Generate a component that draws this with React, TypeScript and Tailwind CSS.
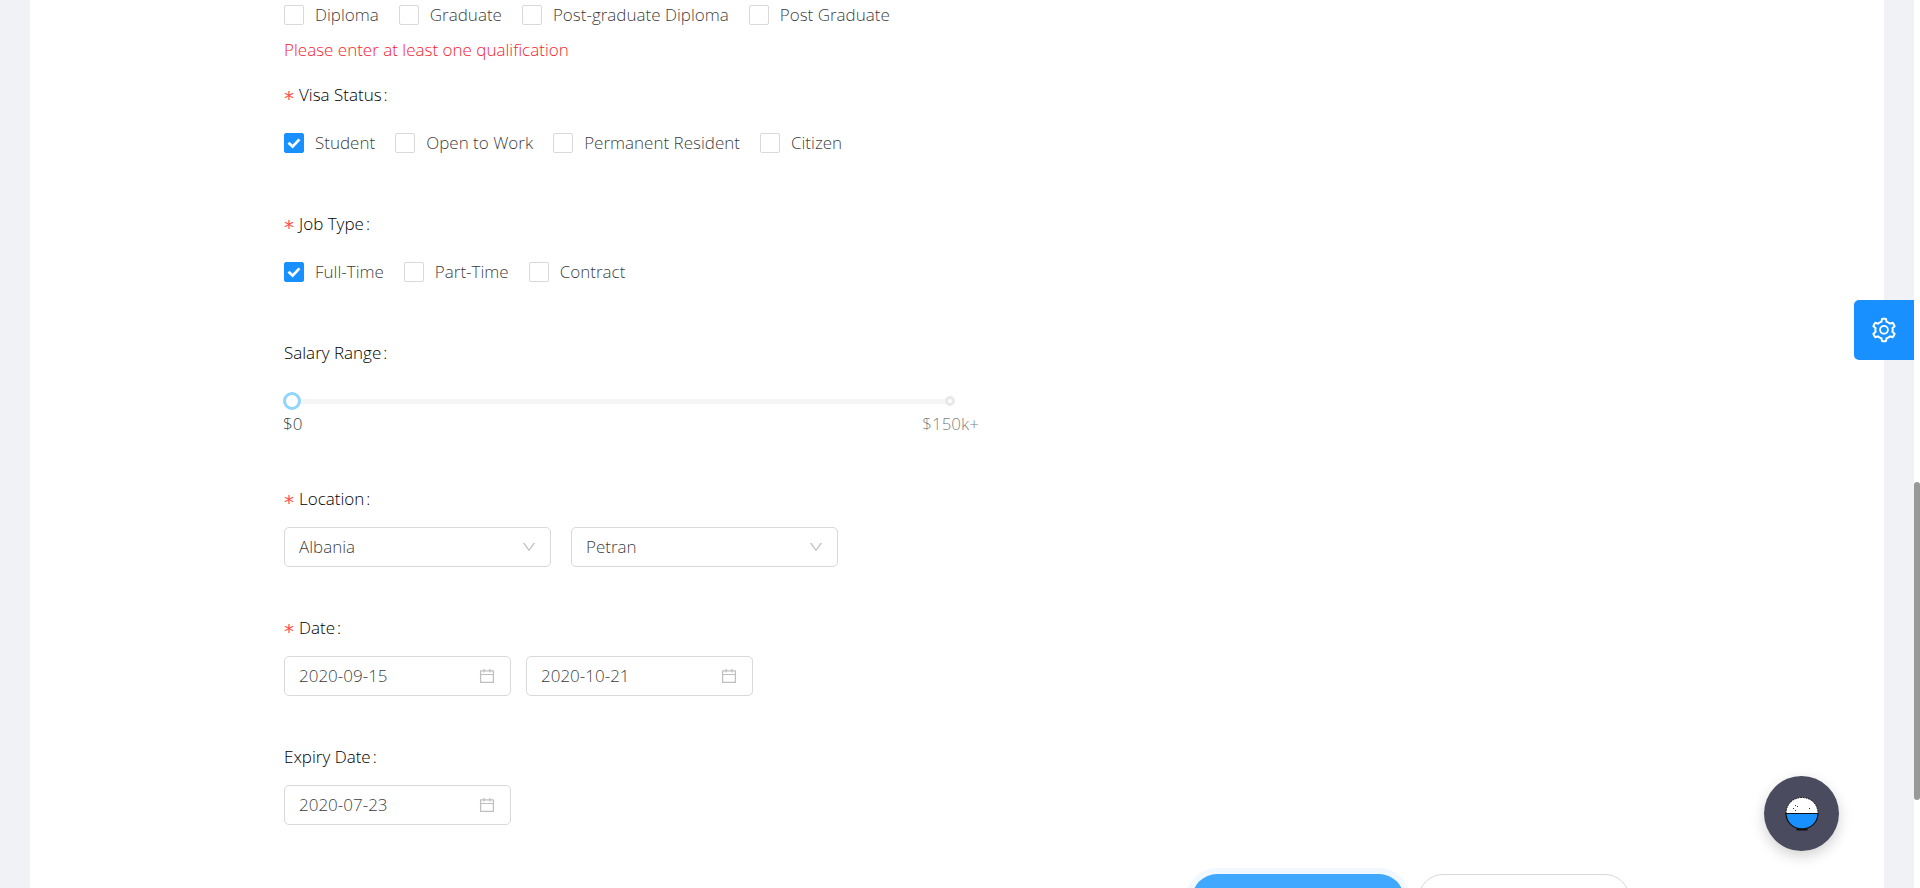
import { useState, type ReactNode } from "react";
import { AiOutlineCalendar, AiOutlineDown, AiOutlineSetting } from "react-icons/ai";

function Label({ text, htmlFor, required }: { text: string; htmlFor?: string; required?: boolean }) {
  return (
    <label htmlFor={htmlFor} className="mb-2 flex h-10 items-center text-black">
      {required && (
        <span className="mt-1.5 w-[15px] font-['DejaVu_Sans'] text-xl leading-5 font-normal text-[#ff4d4f]">*</span>
      )}
      <span>{text}</span>
      <span className="ml-0.5">:</span>
    </label>
  );
}

function Field({ text, htmlFor, required, children }: { text: string; htmlFor?: string; required?: boolean; children: ReactNode }) {
  return (
    <div className="mb-[41px]">
      <Label text={text} htmlFor={htmlFor} required={required} />
      {children}
    </div>
  );
}

function Check({ label, defaultChecked }: { label: string; defaultChecked?: boolean }) {
  return (
    <label className="flex items-center gap-[11px]">
      <span className="grid size-5">
        <input
          type="checkbox"
          defaultChecked={defaultChecked}
          className="peer col-start-1 row-start-1 size-5 appearance-none rounded-[2px] border border-[#d9d9d9] bg-white checked:border-[#1890ff] checked:bg-[#1890ff]"
        />
        <svg
          viewBox="0 0 20 20"
          aria-hidden="true"
          className="pointer-events-none invisible col-start-1 row-start-1 size-5 peer-checked:visible"
        >
          <path d="M4.5 9.8 8.6 13.6 15.4 6.4" fill="none" stroke="#fff" strokeWidth="2.8" />
        </svg>
      </span>
      <span>{label}</span>
    </label>
  );
}

function CheckRow({ items, checked }: { items: string[]; checked?: string }) {
  return (
    <div className="flex h-10 flex-wrap items-center gap-5">
      {items.map((item) => (
        <Check key={item} label={item} defaultChecked={item === checked} />
      ))}
    </div>
  );
}

function Picker({ id, label, value }: { id: string; label: string; value: string }) {
  return (
    <div className="flex h-10 w-[227px] items-center rounded-[5px] border border-[#d9d9d9] bg-white px-3.5">
      <input id={id} aria-label={label} defaultValue={value} className="min-w-0 flex-1 bg-transparent outline-none" />
      <AiOutlineCalendar className="size-[18px] text-black/25" aria-hidden="true" />
    </div>
  );
}

function Select({ id, label, value }: { id: string; label: string; value: string }) {
  return (
    <div className="grid w-[267px] items-center">
      <select
        id={id}
        aria-label={label}
        defaultValue={value}
        className="col-start-1 row-start-1 h-10 appearance-none rounded-[5px] border border-[#d9d9d9] bg-white px-3.5"
      >
        <option>{value}</option>
      </select>
      <AiOutlineDown
        className="pointer-events-none col-start-1 row-start-1 mr-3.5 size-4 justify-self-end text-black/25"
        aria-hidden="true"
      />
    </div>
  );
}

function RiceBowl() {
  return (
    <svg viewBox="0 0 36 36" className="size-9" aria-hidden="true">
      <path d="M2 17.5C2 8 9 1.500 18 1.500S34 8 34 17.500Z" fill="#fff" />
      <path
        d="M2 17.500C2 8 9 1.500 18 1.500S34 8 34 17.500"
        fill="none"
        stroke="#111"
        strokeWidth="1"
        strokeDasharray="1.600 1"
      />
      <path d="M2 17.500h32C34 26 27 33 18 33S2 26 2 17.500Z" fill="#1890ff" stroke="#111" strokeWidth="1.200" />
      <path d="M12.500 33.500h11" stroke="#111" strokeWidth="2" />
      <path d="M9 12.500h1M11 9.500h1M13 10.500h1M11 14.500h1M25 12.500h1" stroke="#333" />
    </svg>
  );
}

export default function App() {
  const [salary, setSalary] = useState(0);
  return (
    <div className="relative flex h-screen overflow-hidden bg-white font-['Open_Sans',sans-serif] text-[17px] leading-6 font-light text-black/80">
      <div className="min-w-0 flex-1 bg-[#f0f2f5] px-[30px]">
        <main className="min-h-full bg-white">
          <form className="mx-auto w-full max-w-[1346px]">
            <div className="-mt-[5px]">
              <CheckRow items={["Diploma", "Graduate", "Post-graduate Diploma", "Post Graduate"]} />
              <p className="h-10 leading-[30px] text-[#f5222d]">Please enter at least one qualification</p>
            </div>
            <Field text="Visa Status" required>
              <CheckRow items={["Student", "Open to Work", "Permanent Resident", "Citizen"]} checked="Student" />
            </Field>
            <Field text="Job Type" required>
              <CheckRow items={["Full-Time", "Part-Time", "Contract"]} checked="Full-Time" />
            </Field>
            <Field text="Salary Range" htmlFor="salary">
              <div className="-ml-px w-[676px] pt-[11px]">
                <div className="relative flex h-[18px] items-center px-[9px]">
                  <div className="h-[5px] flex-1 rounded-full bg-[#f5f5f5]" />
                  <span className="absolute top-1 right-1 size-2.5 rounded-full border-3 border-[#e8e8e8] bg-white" />
                  <input
                    id="salary"
                    type="range"
                    min={0}
                    max={150}
                    value={salary}
                    onChange={(e) => setSalary(Number(e.target.value))}
                    className="absolute inset-0 h-[18px] w-full appearance-none bg-transparent [&::-webkit-slider-thumb]:size-[18px] [&::-webkit-slider-thumb]:appearance-none [&::-webkit-slider-thumb]:rounded-full [&::-webkit-slider-thumb]:border-3 [&::-webkit-slider-thumb]:border-[#91d5ff] [&::-webkit-slider-thumb]:bg-white"
                  />
                </div>
                <div className="-mr-5 flex h-7 items-center justify-between">
                  <span>$0</span>
                  <span className="text-black/55">$150k+</span>
                </div>
              </div>
            </Field>
            <Field text="Location" htmlFor="country" required>
              <div className="flex gap-5">
                <Select id="country" label="Country" value="Albania" />
                <Select id="city" label="City" value="Petran" />
              </div>
            </Field>
            <Field text="Date" htmlFor="start" required>
              <div className="flex gap-[15px]">
                <Picker id="start" label="Start date" value="2020-09-15" />
                <Picker id="end" label="End date" value="2020-10-21" />
              </div>
            </Field>
            <Field text="Expiry Date" htmlFor="expiry">
              <Picker id="expiry" label="Expiry date" value="2020-07-23" />
            </Field>
            <div className="flex justify-end gap-3.5 pt-2">
              <button
                type="submit"
                aria-label="Save"
                className="h-[50px] w-[212px] rounded-full bg-[#40a9ff] shadow-[0_0_0_6px_rgba(24,144,255,0.06)]"
              />
              <button type="button" aria-label="Cancel" className="h-[50px] w-[212px] rounded-full border border-[#d9d9d9] bg-white" />
            </div>
          </form>
        </main>
      </div>
      <div className="w-1.5 bg-white pt-[482px]">
        <div className="h-[318px] rounded-full bg-[#999]" />
      </div>
      <button
        type="button"
        aria-label="Settings"
        className="absolute top-[300px] right-1.5 grid size-[60px] place-items-center rounded-l-[5px] bg-[#1890ff] text-white"
      >
        <AiOutlineSetting className="size-7" />
      </button>
      <button
        type="button"
        aria-label="Help"
        className="absolute right-[81px] bottom-[37px] grid size-[75px] place-items-center rounded-full bg-[#4b4b5f] shadow-[0_5px_14px_rgba(0,0,0,0.18)]"
      >
        <RiceBowl />
      </button>
    </div>
  );
}
